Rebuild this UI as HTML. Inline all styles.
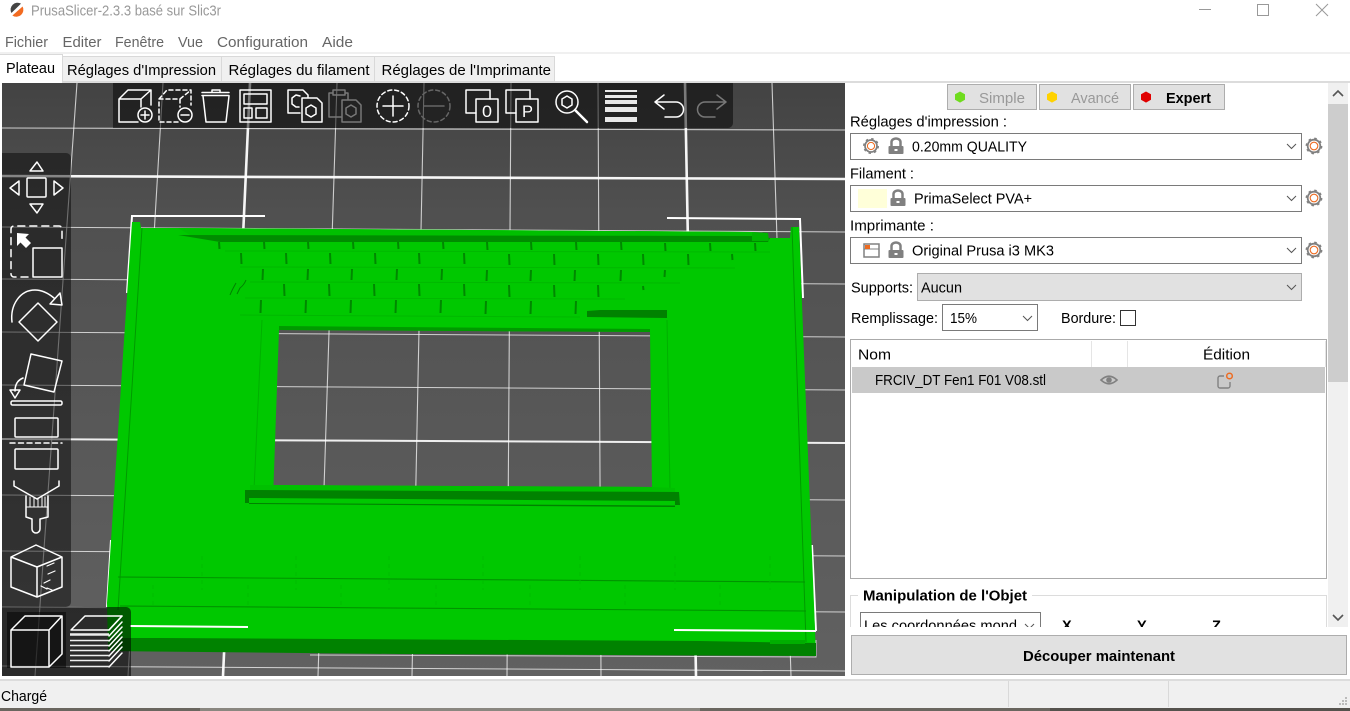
<!DOCTYPE html>
<html><head><meta charset="utf-8"><title>PrusaSlicer</title>
<style>
html,body{margin:0;padding:0;background:#fff;width:1350px;height:711px;overflow:hidden}
svg{display:block;position:absolute;left:0;top:0}
text{font-family:"Liberation Sans",sans-serif;font-size:14.5px;fill:#000}
.b{font-weight:bold}
.s{fill:none;stroke:#fff;stroke-width:1.5;stroke-linejoin:round;stroke-linecap:round}
.d{fill:none;stroke:#777;stroke-width:1.5;stroke-linejoin:round;stroke-linecap:round}
.chev{fill:none;stroke:#555;stroke-width:1}
</style></head><body>
<svg width="1350" height="711" viewBox="0 0 1350 711" xmlns="http://www.w3.org/2000/svg">
<defs>
<linearGradient id="bg" x1="0" y1="0" x2="0" y2="1"><stop offset="0" stop-color="#434343"/><stop offset=".22" stop-color="#505050"/><stop offset="1" stop-color="#616161"/></linearGradient>
<clipPath id="cv"><rect x="2" y="83" width="843" height="593"/></clipPath>
<clipPath id="grp"><rect x="848" y="585" width="480" height="42"/></clipPath>
<g id="gear"><circle r="7.700" fill="none" stroke="#808080" stroke-width="1.400" stroke-dasharray="2.600 3.440"/><circle r="6.300" fill="#fff" stroke="#808080" stroke-width="1.800"/><circle r="3.800" fill="#fff" stroke="#ed6b21" stroke-width="1.100"/></g>
<g id="lock"><rect x="-7.500" y="0" width="15" height="8" rx="1" fill="#808080"/><path d="M-4.500 0v-4a4.500 3.500 0 0 1 9 0v4" fill="none" stroke="#808080" stroke-width="2.500"/><path d="M-1.500 4h3" stroke="#fff" stroke-width="2"/></g>
</defs>

<!-- title bar -->
<path d="M21 3.600a7 7 0 0 0-9.600 9.400z" fill="#444"/><path d="M22.600 6.500a7 7 0 0 1-10.200 9z" fill="#f26b21"/>
<text x="31" y="15.500" textLength="190" lengthAdjust="spacingAndGlyphs" style="fill:#999">PrusaSlicer-2.3.3 basé sur Slic3r</text>
<path d="M1199 9.500h12" stroke="#999" stroke-width="1"/><rect x="1257.500" y="4.500" width="11" height="11" fill="none" stroke="#999"/><path d="M1316 4l12 12M1328 4l-12 12" stroke="#999" stroke-width="1"/>

<!-- menu -->
<text style="fill:#666" x="5" y="47" textLength="43" lengthAdjust="spacingAndGlyphs">Fichier</text>
<text style="fill:#666" x="62.500" y="47" textLength="39" lengthAdjust="spacingAndGlyphs">Editer</text>
<text style="fill:#666" x="115" y="47" textLength="49" lengthAdjust="spacingAndGlyphs">Fenêtre</text>
<text style="fill:#666" x="178" y="47" textLength="25" lengthAdjust="spacingAndGlyphs">Vue</text>
<text style="fill:#666" x="217" y="47" textLength="91" lengthAdjust="spacingAndGlyphs">Configuration</text>
<text style="fill:#666" x="322" y="47" textLength="31" lengthAdjust="spacingAndGlyphs">Aide</text>
<rect x="0" y="52" width="1350" height="2" fill="#f0f0f0"/>

<!-- tabs -->
<rect x="0" y="81" width="1350" height="2" fill="#dcdcdc"/>
<rect x="62.500" y="56.500" width="159" height="25" fill="#f0f0f0" stroke="#d9d9d9"/>
<rect x="221.500" y="56.500" width="153" height="25" fill="#f0f0f0" stroke="#d9d9d9"/>
<rect x="374.500" y="56.500" width="180" height="25" fill="#f0f0f0" stroke="#d9d9d9"/>
<rect x="0" y="54" width="62" height="29" fill="#fff"/><path d="M62.500 54v27M0 54.500h62" stroke="#d9d9d9" fill="none"/>
<text x="6" y="73" textLength="49" lengthAdjust="spacingAndGlyphs">Plateau</text>
<text x="67" y="75" textLength="149" lengthAdjust="spacingAndGlyphs">Réglages d'Impression</text>
<text x="228.500" y="75" textLength="141" lengthAdjust="spacingAndGlyphs">Réglages du filament</text>
<text x="381.500" y="75" textLength="169.500" lengthAdjust="spacingAndGlyphs">Réglages de l'Imprimante</text>

<!-- 3D canvas -->
<g clip-path="url(#cv)">
<rect x="2" y="83" width="843" height="593" fill="url(#bg)"/>
<g stroke="#fff" stroke-opacity=".72" stroke-width="1.100" fill="none">
<path d="M77 83L35 676M163 83L128 676M337 83L318 676M424 83L412 676M511 83L507 676M598 83L601 676M772 83L791 676M859 83L885 676"/>
<path d="M2 128L845 130M2 227L845 232M2 279L845 284M2 332L845 337M2 385L845 390M2 495L845 500M2 551L845 556M2 607L845 612M2 666L845 671"/>
</g>
<g stroke="#fff" stroke-opacity=".95" stroke-width="2.600" fill="none">
<path d="M250 83L223 676M685 83L696 676"/><path d="M2 176L845 179"/>
</g>
<path d="M2 439L845 443" stroke="#fff" stroke-opacity=".9" stroke-width="2" fill="none"/>

<!-- outline corners -->
<path d="M127 293L132 216H265M667 218L800 219L803 298" fill="none" stroke="#fff" stroke-width="2"/>
<path d="M111 540L107 607" fill="none" stroke="#fff" stroke-width="2"/>
<path d="M812 545L816 631" fill="none" stroke="#fff" stroke-width="2"/>
<path d="M310 655L816 657V640" fill="none" stroke="#fff" stroke-opacity=".7" stroke-width="1"/>

<!-- green object -->
<path fill-rule="evenodd" fill="#00c800" d="M132 222L140 222L141 228L178 228L752 232L768 238L790 238L791 227L799 227L804 355L816 655L108 649L107 603L123 355ZM279 330L650 332L652 487L273.500 485Z"/>
<path fill="#008200" d="M108 638L160 638L700 641L816 643V656L400 654L108 651Z"/>
<path fill="#00ae00" d="M770 640L805 640V644H770Z"/>
<!-- top band -->
<path fill="#00c000" d="M178 228L752 232L768 233L768 238L752 237L190 235Z"/>
<path fill="#008c00" d="M178 235L752 236L770 238L768 242L750 242L220 242Z"/>
<path fill="#00b400" d="M752 232L768 233L769 241L752 241Z"/>
<!-- brick row shades -->
<g fill="none" stroke="#00b800" stroke-width="1">
<path d="M225 251L770 252M240 267L735 268M250 282L680 283M245 298L625 299M240 315L580 317"/>
</g>
<!-- brick ticks -->
<g fill="none" stroke="#008800" stroke-width="2">
<path d="M219 242l.5 7M264 242l.5 7M308 242l.5 7M353 242l.5 7M398 242l.5 7M443 242l.5 7M487 242l.5 8M531 242l.5 8M576 242l.5 8M621 242l.5 8M665 243l.5 8M710 243l.5 8M755 243l.5 8"/>
<path d="M241 253l.5 11M286 253l.5 11M330 253l.5 11M375 253l.5 11M419 253l.5 11M464 253l.5 11M509 254l.5 11M554 254l.5 11M598 254l.5 11M643 254l.5 11M688 254l.5 11M732 254l.5 6"/>
<path d="M263 269l-.5 11M308 269l-.5 11M352 269l-.5 11M397 269l-.5 11M442 269l-.5 11M487 270l-.5 11M531 270l-.5 11M575 270l-.5 11M621 270l-.5 11M665 270l-.5 7"/>
<path d="M284 284l.5 12M329 284l.5 12M374 284l.5 12M419 284l.5 12M464 284l.5 12M509 285l.5 12M554 285l.5 12M598 285l.5 12M643 286l.5 4"/>
<path d="M261 300l-.5 13M306 300l-.5 13M351 300l-.5 13M396 300l-.5 13M441 300l-.5 13M486 301l-.5 13M531 301l-.5 13M576 301l-.5 13"/>
</g>
<path d="M236 283q-4 7-6 12M246 280q-2 5-6 8l-3 6" fill="none" stroke="#008200" stroke-width="1"/>
<!-- dark bars -->
<path fill="#008200" d="M587 311L600 310L667 310L667 318L587 317Z"/>
<path fill="#009a00" d="M279 326L650 329L650 332L279 330Z"/>
<!-- long thin lines -->
<path d="M142 228L118 610M792 227L806 642" fill="none" stroke="#009a00" stroke-width="1"/>
<path d="M262 320L254 490M667 320L670 490" fill="none" stroke="#00b000" stroke-width="1"/>
<path d="M118 577L805 582M120 606L806 611" fill="none" stroke="#009400" stroke-width="1.100"/>
<path d="M202 556V590M296 556V590M389 556V590M483 556V590M580 556V590M675 556V590M770 556V590M153 585V608M248 585V608M341 585V608M436 585V608M530 585V608M625 585V608M720 585V608" fill="none" stroke="#00bc00" stroke-width="1" stroke-dasharray="4 4"/>
<!-- ledge -->
<path fill="#00c000" d="M250 485L273 485L652 487L675 488L675 495L250 492Z"/>
<path fill="#008200" d="M245 490L679 492L680 505L675 505L675 507L249 504L249 503L245 503Z"/>
<path fill="#00c800" d="M249 498L675 501L675 505.500L249 503Z"/>
<!-- white bottom lines (on top of object) -->
<path d="M130 626L248 627M674 630L816 631" fill="none" stroke="#fff" stroke-width="2"/>

<!-- toolbars -->
<path d="M113 83H733V123a5 5 0 0 1-5 5H113Z" fill="#000" fill-opacity=".5"/>
<path d="M2 153H66a5 5 0 0 1 5 5V602a5 5 0 0 1-5 5H2Z" fill="#000" fill-opacity=".46"/>
<path d="M2 607H126a5 5 0 0 1 5 5V676H2Z" fill="#000" fill-opacity=".55"/>
<rect x="7" y="612" width="59" height="56" fill="#000" fill-opacity=".5"/>

<!-- top icons -->
<g class="s">
<path d="M138 122H119V99H141V107M119 99L128 90H151V105M141 99L151 90"/>
<circle cx="145" cy="115" r="7"/><path d="M141 115h8M145 111v8"/>
</g>
<g class="s" stroke-dasharray="4 3">
<path d="M178 122H159V99H180V107M159 99L167 90H191V105M180 99L191 90"/>
</g>
<g class="s"><circle cx="185" cy="115" r="7"/><path d="M181 115h8"/></g>
<g class="s">
<path d="M202 92.500H229M202 95.500H229M212 92V90H220V92M203 96L206 122H226L229 96"/>
<rect x="240" y="90" width="31" height="32"/><rect x="244" y="94" width="23" height="10"/><rect x="244" y="108" width="8" height="10"/><rect x="256" y="108" width="11" height="10"/>
<path d="M300 113H288V90H303L308 95V98M302 98H317L322 103V122H302Z"/>
<path d="M311 105l5 3v6l-5 3l-5-3v-6ZM300 96l-4-1l-4 3v6l4 3h3"/>
</g>
<g class="d">
<path d="M341 117H329V93H333M345 93H348V99M333 90H345V95H333ZM342 100H356L361 105V122H342Z"/>
<path d="M351 105l5 3v6l-5 3l-5-3v-6Z"/>
</g>
<g class="s"><circle cx="393" cy="106" r="16" stroke-dasharray="4 3"/><path d="M383 106h20M393 96v20"/></g>
<g class="d" style="stroke:#666"><circle cx="434" cy="106" r="16" stroke-dasharray="4 3"/><path d="M424 106h20"/></g>
<g class="s">
<path d="M476 113H466V90H490V99"/><rect x="476" y="99" width="22" height="23"/>
<path d="M516 113H506V90H530V99"/><rect x="516" y="99" width="22" height="23"/>
<circle cx="567" cy="102" r="11"/><path d="M567 96l5 3v6l-5 3l-5-3v-6Z"/><path d="M575 110L587 122" stroke-width="2.500"/>
<path d="M664 95L655 102L664 109M655 102H676A7.500 7.500 0 0 1 676 117H665"/>
</g>
<text x="482" y="117" textLength="10" lengthAdjust="spacingAndGlyphs" style="fill:#fff;font-size:17px">0</text>
<text x="522" y="117" textLength="11" lengthAdjust="spacingAndGlyphs" style="fill:#fff;font-size:17px">P</text>
<g fill="#e8e8e8">
<rect x="605" y="90" width="32" height="2"/><rect x="605" y="95" width="32" height="3"/><rect x="605" y="100" width="32" height="4"/><rect x="605" y="107" width="32" height="5"/><rect x="605" y="117" width="32" height="5"/>
</g>
<g class="d"><path d="M717 95L726 102L717 109M726 102H705A7.500 7.500 0 0 0 705 117H715"/></g>

<!-- left icons -->
<g class="s">
<path d="M37 162L30 171H43ZM10 188L19 181V195ZM63 188L54 181V195ZM37 213L30 204H43Z"/>
<rect x="27" y="178" width="19" height="19" rx="1"/>
<path d="M28 277H14a3 3 0 0 1-3-3V229a3 3 0 0 1 3-3H59a3 3 0 0 1 3 3V240" stroke-dasharray="7 5"/>
<rect x="33" y="248" width="29" height="29"/>
<path d="M38 303L57 322L38 341L19 322Z"/>
<path d="M12 322C10 305 20 290 35 290C42 290 48 293 54 298"/><path d="M60 293L50 304L62 305Z"/>
<path d="M31 354L62 361L54 392L24 385Z"/>
<path d="M23 378C18 380 15 384 15 391"/><path d="M10 390H20L15 398Z"/>
<rect x="11" y="401" width="51" height="4" rx="1.500"/>
<rect x="15" y="418" width="43" height="19" rx="1"/><path d="M10 443H62" stroke-dasharray="5 3.500"/><rect x="15" y="449" width="43" height="20" rx="1"/>
<path d="M14 481V486L37 499L59 486V481"/>
<path d="M26 496V517L32 519V529a4 4 0 0 0 8 0V519L48 517V496"/><path d="M26 507H48M30 497V507M34 498V507M38 498V507M42 497V507M45 497V507" stroke-width="1"/>
<path d="M36 545L62 557L37 567L11 557ZM11 557V587L37 597L62 587V557M37 567V597"/>
<path d="M47 566l7-3M48 574l7-3M44 583l6-3M41 586l6 3M47 588l5 2" stroke-width="1.200"/>
<path d="M11 630H49V667H11ZM11 630L25 616H62V654L49 667M49 630L62 616"/>
<path d="M71 630L85 616H122L109 630Z"/>
<path d="M109 630L122 616M109 636L122 622M109 641L122 627M109 646L122 632M109 651L122 637M109 656L122 642M109 661L122 647M109 667L122 653"/>
</g>
<path d="M17 233L29 234L25.500 237.500L31 243L26 248L20.500 242.500L17 246Z" fill="#fff"/>
<g fill="none" stroke="#eee"><path d="M70 634.500H109" stroke-width="2.500"/><path d="M70 640.500H109M70 645.500H109M70 650.500H109M70 655.500H109M70 660.500H109M70 666.500H109" stroke-width="1.500"/></g>
</g>

<!-- right panel: mode buttons -->
<g fill="#e1e1e1" stroke="#adadad">
<rect x="947.500" y="84.500" width="89" height="25"/><rect x="1039.500" y="84.500" width="91" height="25"/><rect x="1133.500" y="84.500" width="91" height="25"/>
</g>
<path d="M960 91.500l5 2.800v5.500l-5 2.800l-5-2.800v-5.500Z" fill="#6fdc1e"/>
<path d="M1052 91.500l5 2.800v5.500l-5 2.800l-5-2.800v-5.500Z" fill="#ffd200"/>
<path d="M1146 91.500l5 2.800v5.500l-5 2.800l-5-2.800v-5.500Z" fill="#e00000"/>
<text x="979" y="103" textLength="46" lengthAdjust="spacingAndGlyphs" style="fill:#999">Simple</text>
<text x="1071" y="103" textLength="48" lengthAdjust="spacingAndGlyphs" style="fill:#999">Avancé</text>
<text x="1166" y="103" textLength="45" lengthAdjust="spacingAndGlyphs" class="b">Expert</text>

<!-- presets -->
<text x="850" y="126.500" textLength="157" lengthAdjust="spacingAndGlyphs">Réglages d'impression :</text>
<rect x="850.500" y="133.500" width="451" height="26" fill="#fff" stroke="#7a7a7a"/>
<use href="#gear" transform="translate(871 146) scale(.95)"/><use href="#lock" x="896" y="146"/>
<text x="912" y="151.500" textLength="115" lengthAdjust="spacingAndGlyphs">0.20mm QUALITY</text>
<path class="chev" d="M1287 144l4.500 4.500l4.500-4.500"/><use href="#gear" x="1314" y="146"/>

<text x="850" y="178.500" textLength="64" lengthAdjust="spacingAndGlyphs">Filament :</text>
<rect x="850.500" y="185.500" width="451" height="26" fill="#fff" stroke="#7a7a7a"/>
<rect x="858" y="189" width="29" height="19" fill="#ffffd9"/><use href="#lock" x="898" y="198"/>
<text x="914" y="203.500" textLength="118" lengthAdjust="spacingAndGlyphs">PrimaSelect PVA+</text>
<path class="chev" d="M1287 196l4.500 4.500l4.500-4.500"/><use href="#gear" x="1314" y="198"/>

<text x="850" y="230.500" textLength="84" lengthAdjust="spacingAndGlyphs">Imprimante :</text>
<rect x="850.500" y="237.500" width="451" height="26" fill="#fff" stroke="#7a7a7a"/>
<rect x="864" y="244" width="15" height="13" fill="#fff" stroke="#808080" stroke-width="1.500"/><path d="M864 249h15" stroke="#808080"/><rect x="865" y="245" width="5" height="4" fill="#ed6b21"/>
<use href="#lock" x="896" y="250"/>
<text x="912" y="255.500" textLength="142" lengthAdjust="spacingAndGlyphs">Original Prusa i3 MK3</text>
<path class="chev" d="M1287 248l4.500 4.500l4.500-4.500"/><use href="#gear" x="1314" y="250"/>

<!-- supports -->
<text x="851" y="292.500" textLength="62" lengthAdjust="spacingAndGlyphs">Supports:</text>
<rect x="917.500" y="273.500" width="384" height="27" fill="#e1e1e1" stroke="#adadad"/>
<text x="921" y="292.500" textLength="41" lengthAdjust="spacingAndGlyphs">Aucun</text>
<path class="chev" d="M1287 285l4.500 4.500l4.500-4.500"/>
<text x="851" y="323" textLength="87" lengthAdjust="spacingAndGlyphs">Remplissage:</text>
<rect x="942.500" y="304.500" width="95" height="26" fill="#fff" stroke="#7a7a7a"/>
<text x="950" y="323" textLength="27" lengthAdjust="spacingAndGlyphs">15%</text>
<path class="chev" d="M1023 316l4.500 4.500l4.500-4.500"/>
<text x="1061" y="323" textLength="55" lengthAdjust="spacingAndGlyphs">Bordure:</text>
<rect x="1120.500" y="310.500" width="15" height="15" fill="#fff" stroke="#333"/>

<!-- list -->
<rect x="850.500" y="339.500" width="476" height="239" fill="#fff" stroke="#aaa"/>
<path d="M1091.500 341V367M1127.500 341V367M1325.500 341V367" stroke="#e5e5e5"/>
<text x="858" y="359.500" textLength="33" lengthAdjust="spacingAndGlyphs">Nom</text>
<text x="1203" y="359.500" textLength="47" lengthAdjust="spacingAndGlyphs">Édition</text>
<rect x="852" y="367" width="473" height="26" fill="#c9c9c9"/>
<text x="875" y="385" textLength="171" lengthAdjust="spacingAndGlyphs">FRCIV_DT Fen1 F01 V08.stl</text>
<path d="M1101 380q8-7.500 16 0q-8 7.500-16 0Z" fill="none" stroke="#808080" stroke-width="1.600"/><circle cx="1109" cy="380" r="2.800" fill="#808080"/>
<path d="M1224 376H1220a2 2 0 0 0-2 2V386a2 2 0 0 0 2 2H1228a2 2 0 0 0 2-2V382" fill="none" stroke="#808080" stroke-width="1.400"/>
<circle cx="1229.500" cy="376" r="2.800" fill="none" stroke="#ed6b21" stroke-width="1.500"/>

<!-- manipulation group -->
<path d="M850.500 627V595.500H858M1032 595.500H1326.500V627" fill="none" stroke="#dcdcdc"/>
<text x="863" y="600.500" textLength="164" lengthAdjust="spacingAndGlyphs" class="b">Manipulation de l'Objet</text>
<g clip-path="url(#grp)">
<rect x="860.500" y="612.500" width="180" height="26" fill="#fff" stroke="#7a7a7a"/>
<text x="864" y="630.500" textLength="153" lengthAdjust="spacingAndGlyphs">Les coordonnées mond</text>
<path class="chev" d="M1025 624l4.500 4.500l4.500-4.500"/>
<text x="1062" y="630.500" class="b">X</text><text x="1137" y="630.500" class="b">Y</text><text x="1212" y="630.500" class="b">Z</text>
</g>

<!-- scrollbar -->
<rect x="1328" y="83" width="20" height="544" fill="#f0f0f0"/>
<rect x="1328" y="104" width="20" height="278" fill="#cdcdcd"/>
<path d="M1333 96l5-5l5 5M1333 615l5 5l5-5" fill="none" stroke="#555" stroke-width="1.600"/>

<!-- slice button -->
<rect x="851.500" y="635.500" width="495" height="39" fill="#e1e1e1" stroke="#adadad"/>
<text x="1023" y="661" textLength="152" lengthAdjust="spacingAndGlyphs" class="b">Découper maintenant</text>

<!-- status bar -->
<rect x="0" y="679" width="1350" height="2" fill="#dcdcdc"/>
<rect x="0" y="681" width="1350" height="27" fill="#f0f0f0"/>
<path d="M1008.500 681V707M1168.500 681V707" stroke="#d9d9d9"/>
<text x="1" y="701" textLength="46" lengthAdjust="spacingAndGlyphs">Chargé</text>
<g fill="#bbb"><rect x="1345" y="697" width="2" height="2"/><rect x="1342" y="700" width="2" height="2"/><rect x="1345" y="700" width="2" height="2"/><rect x="1339" y="703" width="2" height="2"/><rect x="1342" y="703" width="2" height="2"/><rect x="1345" y="703" width="2" height="2"/></g>
<rect x="0" y="708" width="1350" height="3" fill="#6a665f"/>
<rect x="200" y="708" width="500" height="3" fill="#8a8780"/>
<rect x="1050" y="708" width="300" height="3" fill="#55524d"/>
</svg>
</body></html>
